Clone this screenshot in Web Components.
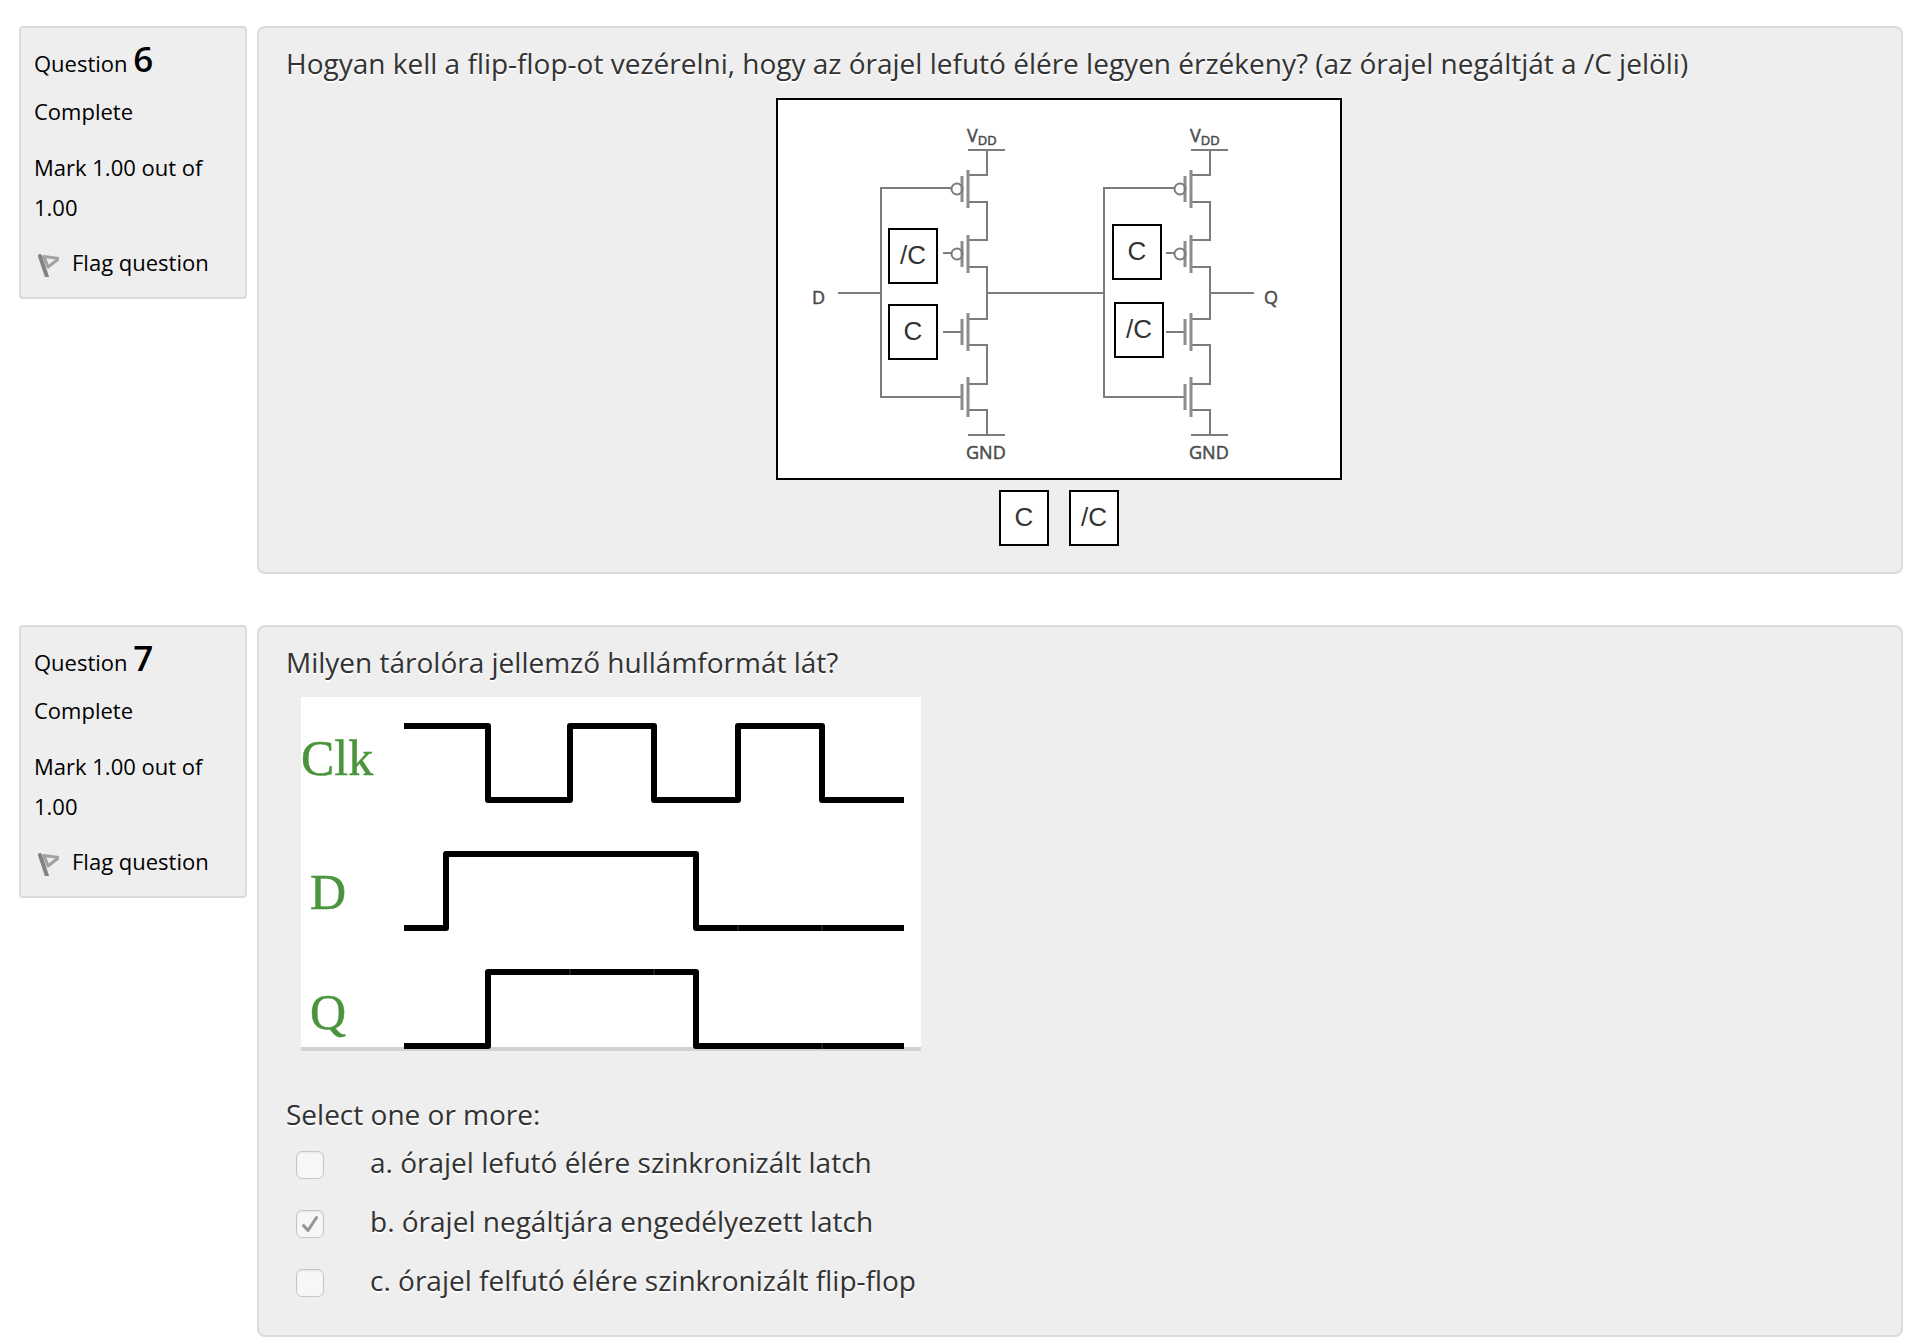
<!DOCTYPE html>
<html lang="hu">
<head>
<meta charset="utf-8">
<title>Quiz review</title>
<style>
body { margin: 0; background: #fff; font-family: "Open Sans", "Noto Sans", sans-serif; }
quiz-review { padding: 26px 15px 7px 19px; }
</style>
</head>
<body>
<quiz-review>
  <quiz-question number="6">
    <question-text>Hogyan kell a flip-flop-ot vezérelni, hogy az órajel lefutó élére legyen érzékeny? (az órajel negáltját a /C jelöli)</question-text>
    <circuit-drop></circuit-drop>
  </quiz-question>
  <quiz-question number="7">
    <question-text>Milyen tárolóra jellemző hullámformát lát?</question-text>
    <wave-form></wave-form>
    <answer-list>
      <answer-option>a. órajel lefutó élére szinkronizált latch</answer-option>
      <answer-option checked>b. órajel negáltjára engedélyezett latch</answer-option>
      <answer-option>c. órajel felfutó élére szinkronizált flip-flop</answer-option>
    </answer-list>
  </quiz-question>
</quiz-review>
<script>
class Base extends HTMLElement {
  connectedCallback() {
    if (this.shadowRoot) return;
    this.attachShadow({ mode: "open" }).innerHTML = this.render();
  }
}

customElements.define("quiz-review", class extends Base {
  render() {
    return `<style>:host{display:flex;flex-direction:column;gap:51px}</style><slot></slot>`;
  }
});

customElements.define("quiz-question", class extends Base {
  render() {
    return `<style>
      :host{display:grid;grid-template-columns:228px minmax(0,1fr);column-gap:10px;align-items:start}
      .body{box-sizing:border-box;border:2px solid #dbdbdb;border-radius:8px;background:#eee;
        padding:15px 69px 26px 27px;color:#333}
    </style>
    <question-info number="${this.getAttribute("number")}"></question-info>
    <section class="body"><slot></slot></section>`;
  }
});

customElements.define("question-info", class extends Base {
  render() {
    return `<style>
      :host{display:flex;flex-direction:column;box-sizing:border-box;border:2px solid #dbdbdb;border-radius:4px;
        background:#eee;color:#000;padding:9px 13px 16px;font-size:22px;line-height:40px}
      h3{margin:0 0 2px;font-size:22px;line-height:52px;font-weight:400}
      h3 b{font-size:35px;font-weight:600;line-height:40px}
      .grade{margin:16px 0}
      button{all:unset;display:flex;align-items:center;gap:13px;line-height:38px;cursor:pointer}
      svg{width:25px;height:30px;flex:none}
    </style>
    <h3>Question <b>${this.getAttribute("number")}</b></h3>
    <div class="state">Complete</div>
    <div class="grade">Mark 1.00 out of 1.00</div>
    <button type="button"><svg viewBox="0 0 25 30" fill="none" stroke-linejoin="round" stroke-linecap="round" aria-hidden="true">
      <path d="M10 9.500 25 11.500 14 20z" stroke="#a2a2a2" stroke-width="3"/>
      <path d="M6 9 13 30" stroke="#828282" stroke-width="4"/></svg><span>Flag question</span></button>`;
  }
});

customElements.define("question-text", class extends Base {
  render() {
    return `<style>:host{display:block;font-size:28px;line-height:40px;text-shadow:0 2px 0 #fff}</style><slot></slot>`;
  }
});

customElements.define("drag-tile", class extends Base {
  render() {
    return `<style>
      :host{display:block}
      button{display:block;box-sizing:border-box;width:50px;height:56px;margin:0;padding:0 0 3px;border:2px solid #000;
        border-radius:0;background:#fff;color:#333;font:26px/30px "Liberation Sans",Arial,sans-serif;text-align:center}
    </style><button type="button"><slot></slot></button>`;
  }
});

customElements.define("circuit-drop", class extends Base {
  render() {
    // One clocked inverter stage: two p-type transistors over two n-type ones.
    const stage = x => `<g transform="translate(${x} 0)">
      <path d="M190 50H227M209 50V75H190M190 102H209V140H190M190 167H209V219H190M190 245H209V284H190M190 310H209V335M190 335H227
        M173 88H103V297H184M165 153H173M165 232H184"/>
      <path class="gate" d="M190 70V108M190 135V173M190 213V251M190 277V317M184 76V102M184 141V167M184 219V245M184 284V310"/>
      <circle cx="179" cy="89" r="5.5"/><circle cx="179" cy="154" r="5.5"/>
      <g class="t"><text x="189" y="42">V<tspan class="s" dy="3">DD</tspan></text><text x="188" y="359">GND</text></g></g>`;
    return `<style>
      :host{display:flex;flex-direction:column;align-items:center;gap:10px;padding-top:15px}
      .board{position:relative;border:2px solid #000;background:#fff;width:562px;height:378px}
      svg{display:block;width:100%;height:100%;fill:none;stroke:#7c7c7c;stroke-width:2}
      .gate{stroke:#8c8c8c;stroke-width:3}
      .t{fill:#4c4c4c;stroke:#4c4c4c;stroke-width:.5;font:18px "Open Sans",sans-serif}
      .s{font-size:13px}
      .board drag-tile{position:absolute;left:var(--x);top:var(--y)}
      .homes{display:flex;gap:20px}
    </style>
    <div class="board">
      <svg viewBox="0 0 562 378">${stage(0)}${stage(223)}
        <path d="M60 193H103M209 193H326M432 193H476"/>
        <g class="t"><text x="34" y="204">D</text><text x="486" y="204">Q</text></g></svg>
      <drag-tile style="--x:110px;--y:128px">/C</drag-tile>
      <drag-tile style="--x:110px;--y:204px">C</drag-tile>
      <drag-tile style="--x:334px;--y:124px">C</drag-tile>
      <drag-tile style="--x:336px;--y:202px">/C</drag-tile>
    </div>
    <div class="homes"><drag-tile>C</drag-tile><drag-tile>/C</drag-tile></div>`;
  }
});

customElements.define("wave-form", class extends Base {
  render() {
    return `<style>
      :host{display:block;padding:15px 15px 0}
      svg{display:block;width:620px;height:354px;background:#fff}
      .w{fill:none;stroke:#000;stroke-width:6;stroke-linejoin:round}
      .j{fill:none;stroke:#3c3c3c;stroke-width:1}
      text{fill:#4a953c;stroke:#4a953c;stroke-width:.5;font:50px "Liberation Serif",serif}
    </style>
    <svg viewBox="0 0 620 354">
      <path d="M0 352H620" stroke="#d2d2d2" stroke-width="4"/>
      <text x="0" y="78">Clk</text><text x="9" y="212">D</text><text x="9" y="332">Q</text>
      <g class="w">
        <path d="M103 29H187V103H269V29H353V103H437V29H521V103H603"/>
        <path d="M103 231H145V157H395V231H603"/>
        <path d="M103 349H187V275H395V349H603"/>
      </g>
      <path class="j" d="M437 228V234M521 228V234M269 272V278M353 272V278M521 346V352"/>
    </svg>`;
  }
});

customElements.define("answer-list", class extends Base {
  render() {
    return `<style>
      :host{display:block;padding:43px 0 9px;font-size:28px;line-height:40px;text-shadow:0 2px 0 #fff}
      fieldset{margin:0;padding:0;border:0;min-width:0}
      legend{padding:0}
      .rows{display:flex;flex-direction:column;gap:19px;padding:8px 0 0 10px}
    </style>
    <fieldset><legend>Select one or more:</legend><div class="rows"><slot></slot></div></fieldset>`;
  }
});

customElements.define("answer-option", class extends Base {
  render() {
    return `<style>
      :host{display:block}
      label{display:flex;align-items:center;gap:46px}
      .box{display:grid;flex:none;margin-top:5px}
      .box>*{grid-area:1/1}
      input{appearance:none;box-sizing:border-box;width:28px;height:28px;margin:0;border:1px solid #c6c6c6;
        border-radius:6px;background:#f7f7f7;box-shadow:inset 0 1px 2px #e4e4e4}
      svg{width:28px;height:28px;fill:none;stroke:#959595;stroke-width:3;stroke-linecap:round;stroke-linejoin:round;visibility:hidden}
      input:checked+svg{visibility:visible}
    </style>
    <label><span class="box"><input type="checkbox" disabled ${this.hasAttribute("checked") ? "checked" : ""}>
      <svg viewBox="0 0 28 28" aria-hidden="true"><path d="M7.500 15.500 12 20.500 20.500 7.500"/></svg></span><span><slot></slot></span></label>`;
  }
});
</script>
</body>
</html>
